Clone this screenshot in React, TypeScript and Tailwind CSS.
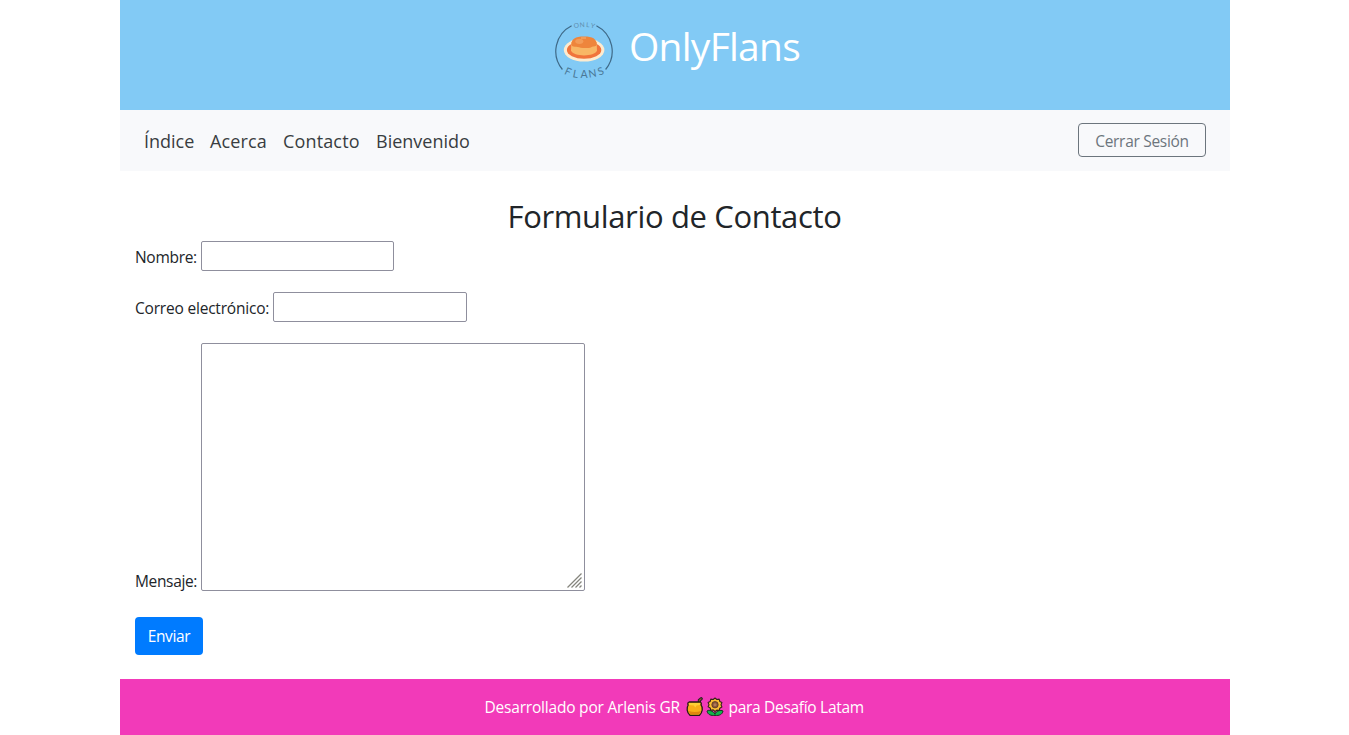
import React from "react";

function FlanLogo() {
  return (
    <svg className="block h-[60px] w-[60px]" viewBox="0 0 60 60" fill="none">
      <path d="M17.6 5.7A28.6 28.6 0 0 0 8.4 49.5M42.4 5.7A28.6 28.6 0 0 1 51.6 49.5" stroke="#3f6a88" strokeWidth="1.2" />
      <g fill="#5f8dac" fontFamily="Lato, 'Open Sans', sans-serif" fontSize="6.6" textAnchor="middle">
        <text transform="translate(22.8 7.8) rotate(-12)">O</text>
        <text transform="translate(28.2 7) rotate(-3)">N</text>
        <text transform="translate(33.6 7.1) rotate(5)">L</text>
        <text transform="translate(38.2 8) rotate(14)">Y</text>
      </g>
      <g fill="#4a7897" fontFamily="Lato, 'Open Sans', sans-serif" fontSize="10.6" textAnchor="middle">
        <text transform="translate(12.6 55) rotate(24)">F</text>
        <text transform="translate(20.9 57.4) rotate(11)">L</text>
        <text transform="translate(30 57.7)">A</text>
        <text transform="translate(39 57.1) rotate(-9)">N</text>
        <text transform="translate(47.9 54.7) rotate(-20)">S</text>
      </g>
      <ellipse cx="30.1" cy="30" rx="20.3" ry="11.6" fill="#fdebcf" />
      <ellipse cx="30.1" cy="30" rx="17.2" ry="8.8" fill="#f0743c" />
      <path d="M17.4 22 17 30.5C19.5 37 40.5 37 43 30.5L42.6 22Z" fill="#f8b766" />
      <path d="M17.3 24.5C17.6 19 21 16.6 30 16.6S42.2 19 42.9 24.3C42.7 26.7 39.5 26.1 37.3 27.2 34 28.6 29.5 28 26.6 27.7 22.8 26.4 18 27.8 17.3 24.5Z" fill="#ee853c" />
      <ellipse cx="25.3" cy="21.3" rx="4" ry="2.6" fill="#f39c58" />
      <path d="M27 18h5" stroke="#f8b67a" strokeWidth=".9" />
    </svg>
  );
}

function HoneyPot() {
  return (
    <svg className="block h-5 w-[18px]" viewBox="0 0 18 20">
      <path d="M13.4 5.5V3.3L15.2 1.8" stroke="#222" strokeWidth="3.2" strokeLinecap="round" fill="none" />
      <path d="M13.4 5V3.3L15.2 1.8" stroke="#8d562e" strokeWidth="1.2" strokeLinecap="round" fill="none" />
      <path d="M3.2 5H14.2C15.5 5.6 15.5 7 15 7.9 17.3 10.5 16.5 15.5 13.5 18.3H4C.8 15.5.3 10.7 2.2 8 1.4 6.8 1.8 5.4 3.2 5Z" fill="#f8ad18" stroke="#241b16" strokeWidth="1.3" />
      <path d="M3 5.9H14V8L10.5 8.4 9.3 10.4 7.8 8.4 3 8Z" fill="#ffcf36" />
      <path d="M2.6 14Q8.8 16.2 15 14L13 17.2H4.5Z" fill="#df850e" />
    </svg>
  );
}

function Sunflower() {
  return (
    <svg className="block h-5 w-[18px]" viewBox="0 0 18 20">
      <path d="M9 13v4.5M8.8 16.6C5 12.6 2 13 1 14 1.6 17.6 5 18.9 9 18.4 13.2 18.9 16.5 17.4 17 14 14.6 12.6 11 13.8 9 16.6Z" fill="#12b34c" stroke="#17321f" strokeWidth="1" />
      <path d="m9 1 1.8 1.5 2.4-.4.6 2.3 2.1 1.2-.9 2.2.9 2.2-2.1 1.2-.6 2.3-2.4-.4L9 14.4l-1.8-1.5-2.4.4-.6-2.3-2.1-1.2L3 7.8l-.9-2.2 2.1-1.2.6-2.3 2.4.4Z" fill="#fbbd35" stroke="#33231a" strokeWidth="1.1" strokeLinejoin="round" />
      <circle cx="9" cy="7.7" r="3.2" fill="#8c5639" stroke="#5a3a25" strokeWidth=".8" />
      <circle cx="9" cy="7.7" r="1.5" fill="#b17a58" />
    </svg>
  );
}

const field = "h-[30px] rounded-[2px] border border-[#8f8f9d] bg-white px-1 outline-none";

export default function App() {
  return (
    <div className="min-h-[735px] bg-white font-['Open_Sans','Noto_Sans',sans-serif] text-[15.5px] leading-6 text-[#212529]">
      <div className="ml-[120px] flex h-[735px] w-[1110px] flex-col">
        <header className="flex h-[110px] shrink-0 justify-center bg-[#82caf5]">
          <div className="flex gap-[15px] pt-5">
            <FlanLogo />
            <h1 className="w-[167px] pt-0.5 text-[39px] leading-12 tracking-[-0.75px] whitespace-nowrap text-white">OnlyFlans</h1>
          </div>
        </header>
        <nav className="flex h-[61px] shrink-0 items-start justify-between bg-[#f8f9fb] px-6 pt-[13px] text-[#393d41]">
          <div className="flex gap-4 pt-1 text-lg leading-7 whitespace-nowrap">
            <a className="w-[50px]">Índice</a>
            <a className="w-[57px] tracking-[0.15px]">Acerca</a>
            <a className="w-[77px] tracking-[0.15px]">Contacto</a>
            <a className="w-[94px]">Bienvenido</a>
          </div>
          <button className="flex h-[34px] w-32 items-center justify-center rounded border border-[#6c757d] pt-px tracking-[-0.3px] whitespace-nowrap text-[#6c757d]">Cerrar Sesión</button>
        </nav>
        <main className="flex h-[508px] shrink-0 flex-col px-[15px] pt-[26px]">
          <h2 className="pt-px pr-px text-center text-[31px] leading-[37px] tracking-[-0.35px] whitespace-nowrap">Formulario de Contacto</h2>
          <form className="flex flex-col items-start pt-1.5" onSubmit={(e) => e.preventDefault()}>
            <div className="flex h-[51px] items-start">
              <label htmlFor="nombre" className="w-[66px] pt-1 tracking-[-0.3px] whitespace-nowrap">Nombre:</label>
              <input id="nombre" className={field + " w-[193px]"} />
            </div>
            <div className="flex h-[51px] items-start">
              <label htmlFor="correo" className="w-[138px] pt-1 tracking-[-0.2px] whitespace-nowrap">Correo electrónico:</label>
              <input id="correo" className={field + " w-[194px]"} />
            </div>
            <div className="flex h-[274px] items-start">
              <label htmlFor="mensaje" className="w-[66px] pt-[226px] tracking-[-0.35px] whitespace-nowrap">Mensaje:</label>
              <div className="relative h-[248px] w-96">
                <textarea id="mensaje" className="block h-full w-full resize-none rounded-[2px] border border-[#8f8f9d] bg-white px-1 outline-none" />
                <svg className="pointer-events-none absolute right-[3px] bottom-[3px] h-[15px] w-[15px]" viewBox="0 0 15 15" stroke="#85857d" strokeWidth="1.3">
                  <path d="M.5 14.5 14.5.5M4.5 14.5l10-10M8.5 14.5l6-6M12.5 14.5l2-2" />
                </svg>
              </div>
            </div>
            <button className="flex h-[38px] w-[68px] items-center justify-center rounded bg-[#007bff] tracking-[-0.35px] whitespace-nowrap text-white">Enviar</button>
          </form>
        </main>
        <footer className="flex h-14 shrink-0 items-center justify-center bg-[#f23ab9] tracking-[-0.3px] whitespace-nowrap text-white">
          <span className="w-[201px] tracking-[-0.2px]">Desarrollado por Arlenis GR</span>
          <span className="flex w-[43px] gap-0.5"><HoneyPot /><Sunflower /></span>
          <span className="w-[137px]">para Desafío Latam</span>
        </footer>
      </div>
    </div>
  );
}
